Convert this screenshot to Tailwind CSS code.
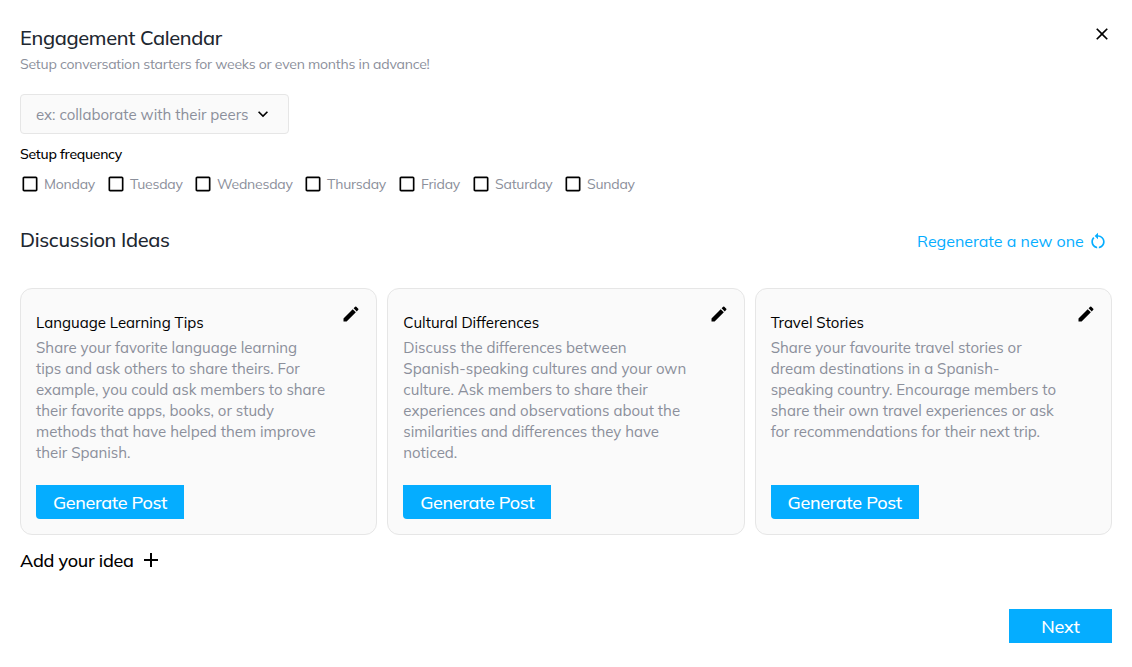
<!DOCTYPE html>
<html lang="en">
  <head>
    <meta charset="UTF-8" />
    <meta name="viewport" content="width=device-width, initial-scale=1.0" />
    <title>Engagement Calendar</title>
    <script src="https://cdn.jsdelivr.net/npm/@tailwindcss/browser@4"></script>
  </head>
  <body class="bg-white text-black font-['Mulish','Lato',sans-serif]">
    <main class="w-[1132px] h-[667px] px-5 pt-6 flex flex-col overflow-hidden whitespace-nowrap">
      <header class="flex justify-between items-start h-[70px]">
        <div>
          <h1 class="text-xl leading-7 font-medium text-[#212730] tracking-[-0.017em]">Engagement Calendar</h1>
          <p class="text-sm leading-6 text-[#8b8f9b] tracking-[-0.0165em]">Setup conversation starters for weeks or even months in advance!</p>
        </div>
        <button aria-label="Close">
          <svg class="w-5 h-5" viewBox="0 0 24 24"><path d="M19 6.41 17.59 5 12 10.59 6.41 5 5 6.41 10.59 12 5 17.59 6.41 19 12 13.41 17.59 19 19 17.59 13.41 12z" /></svg>
        </button>
      </header>

      <button class="w-[269px] h-10 px-[15px] flex items-center gap-1 rounded-[4px] border border-[#e6e6e6] bg-[#fafafa]">
        <span class="w-[213px] pt-0.5 text-left text-[15px] text-[#8b8f9b]">ex: collaborate with their peers</span>
        <svg class="w-5 h-5" viewBox="0 0 24 24"><path d="M7.41 8.59 12 13.17l4.59-4.58L18 10l-6 6-6-6z" /></svg>
      </button>

      <h2 class="mt-2.5 text-sm leading-5 font-medium tracking-[-0.02em]">Setup frequency</h2>
      <div class="mt-2.5 h-5 flex text-sm text-[#8b8f9b] tracking-[-0.016em]">
        <label class="w-[86px] flex items-center gap-1"><svg class="w-5 h-5" viewBox="0 0 24 24" fill="#000"><path d="M19 5v14H5V5h14m0-2H5c-1.1 0-2 .9-2 2v14c0 1.1.9 2 2 2h14c1.1 0 2-.9 2-2V5c0-1.1-.9-2-2-2z" /></svg>Monday</label>
        <label class="w-[87px] flex items-center gap-1"><svg class="w-5 h-5" viewBox="0 0 24 24" fill="#000"><path d="M19 5v14H5V5h14m0-2H5c-1.1 0-2 .9-2 2v14c0 1.1.9 2 2 2h14c1.1 0 2-.9 2-2V5c0-1.1-.9-2-2-2z" /></svg>Tuesday</label>
        <label class="w-[110px] flex items-center gap-1"><svg class="w-5 h-5" viewBox="0 0 24 24" fill="#000"><path d="M19 5v14H5V5h14m0-2H5c-1.1 0-2 .9-2 2v14c0 1.1.9 2 2 2h14c1.1 0 2-.9 2-2V5c0-1.1-.9-2-2-2z" /></svg>Wednesday</label>
        <label class="w-[94px] flex items-center gap-1"><svg class="w-5 h-5" viewBox="0 0 24 24" fill="#000"><path d="M19 5v14H5V5h14m0-2H5c-1.1 0-2 .9-2 2v14c0 1.1.9 2 2 2h14c1.1 0 2-.9 2-2V5c0-1.1-.9-2-2-2z" /></svg>Thursday</label>
        <label class="w-[74px] flex items-center gap-1"><svg class="w-5 h-5" viewBox="0 0 24 24" fill="#000"><path d="M19 5v14H5V5h14m0-2H5c-1.1 0-2 .9-2 2v14c0 1.1.9 2 2 2h14c1.1 0 2-.9 2-2V5c0-1.1-.9-2-2-2z" /></svg>Friday</label>
        <label class="w-[92px] flex items-center gap-1"><svg class="w-5 h-5" viewBox="0 0 24 24" fill="#000"><path d="M19 5v14H5V5h14m0-2H5c-1.1 0-2 .9-2 2v14c0 1.1.9 2 2 2h14c1.1 0 2-.9 2-2V5c0-1.1-.9-2-2-2z" /></svg>Saturday</label>
        <label class="flex items-center gap-1"><svg class="w-5 h-5" viewBox="0 0 24 24" fill="#000"><path d="M19 5v14H5V5h14m0-2H5c-1.1 0-2 .9-2 2v14c0 1.1.9 2 2 2h14c1.1 0 2-.9 2-2V5c0-1.1-.9-2-2-2z" /></svg>Sunday</label>
      </div>

      <div class="mt-8 h-7 flex justify-between items-center">
        <h2 class="text-xl leading-7 font-medium text-[#212730] tracking-[-0.017em]">Discussion Ideas</h2>
        <button class="flex items-center gap-1 pr-1 pt-0.5 text-[#05adff]">
          <span class="w-[167px] text-left text-base leading-6">Regenerate a new one</span>
          <svg class="w-5 h-5" viewBox="0 0 24 24" fill="currentColor"><path d="M12 5V2L8 6l4 4V7c3.31 0 6 2.69 6 6 0 2.97-2.17 5.43-5 5.91v2.02c3.95-.49 7-3.85 7-7.93 0-4.42-3.58-8-8-8zm-6 8c0-1.65.67-3.15 1.76-4.24L6.34 7.34C4.9 8.79 4 10.79 4 13c0 4.08 3.05 7.44 7 7.93v-2.02c-2.83-.48-5-2.94-5-5.91z" /></svg>
        </button>
      </div>

      <section class="mt-[34px] grid grid-cols-3 gap-2.5">
        <article class="relative h-[247px] px-[15px] pt-6 pb-[15px] flex flex-col items-start rounded-xl border border-[#e6e6e6] bg-[#fafafa] text-[15px]">
          <svg class="absolute right-[15px] top-[15px] w-5 h-5" viewBox="0 0 24 24"><path d="M3 17.25V21h3.75L17.81 9.94l-3.75-3.75L3 17.25zM20.71 7.04a.996.996 0 0 0 0-1.41l-2.34-2.34a.996.996 0 0 0-1.41 0l-1.83 1.83 3.75 3.75 1.83-1.83z" /></svg>
          <h3 class="leading-5">Language Learning Tips</h3>
          <p class="mt-1 leading-[21px] text-[#8b8f9b]">Share your favorite language learning<br />tips and ask others to share theirs. For<br />example, you could ask members to share<br />their favorite apps, books, or study<br />methods that have helped them improve<br />their Spanish.</p>
          <button class="mt-auto w-[148px] h-[34px] pt-px rounded-bl-[4px] bg-[#05adff] text-white text-lg font-medium tracking-[-0.02em]">Generate Post</button>
        </article>
        <article class="relative h-[247px] px-[15px] pt-6 pb-[15px] flex flex-col items-start rounded-xl border border-[#e6e6e6] bg-[#fafafa] text-[15px]">
          <svg class="absolute right-[15px] top-[15px] w-5 h-5" viewBox="0 0 24 24"><path d="M3 17.25V21h3.75L17.81 9.94l-3.75-3.75L3 17.25zM20.71 7.04a.996.996 0 0 0 0-1.41l-2.34-2.34a.996.996 0 0 0-1.41 0l-1.83 1.83 3.75 3.75 1.83-1.83z" /></svg>
          <h3 class="leading-5">Cultural Differences</h3>
          <p class="mt-1 leading-[21px] text-[#8b8f9b]">Discuss the differences between<br />Spanish-speaking cultures and your own<br />culture. Ask members to share their<br />experiences and observations about the<br />similarities and differences they have<br />noticed.</p>
          <button class="mt-auto w-[148px] h-[34px] pt-px rounded-bl-[4px] bg-[#05adff] text-white text-lg font-medium tracking-[-0.02em]">Generate Post</button>
        </article>
        <article class="relative h-[247px] px-[15px] pt-6 pb-[15px] flex flex-col items-start rounded-xl border border-[#e6e6e6] bg-[#fafafa] text-[15px]">
          <svg class="absolute right-[15px] top-[15px] w-5 h-5" viewBox="0 0 24 24"><path d="M3 17.25V21h3.75L17.81 9.94l-3.75-3.75L3 17.25zM20.71 7.04a.996.996 0 0 0 0-1.41l-2.34-2.34a.996.996 0 0 0-1.41 0l-1.83 1.83 3.75 3.75 1.83-1.83z" /></svg>
          <h3 class="leading-5">Travel Stories</h3>
          <p class="mt-1 leading-[21px] text-[#8b8f9b]">Share your favourite travel stories or<br />dream destinations in a Spanish-<br />speaking country. Encourage members to<br />share their own travel experiences or ask<br />for recommendations for their next trip.</p>
          <button class="mt-auto w-[148px] h-[34px] pt-px rounded-bl-[4px] bg-[#05adff] text-white text-lg font-medium tracking-[-0.02em]">Generate Post</button>
        </article>
      </section>

      <button class="mt-3 h-7 flex items-center gap-1 self-start text-lg font-medium">
        <span class="w-[115px] text-left tracking-[-0.016em]">Add your idea</span>
        <svg class="w-6 h-6 mb-0.5" viewBox="0 0 24 24"><path d="M19 13h-6v6h-2v-6H5v-2h6V5h2v6h6z" /></svg>
      </button>

      <button class="mt-[34px] self-end w-[103px] h-[34px] pt-px bg-[#05adff] text-white text-lg font-medium tracking-[-0.01em]">Next</button>
    </main>
  </body>
</html>
